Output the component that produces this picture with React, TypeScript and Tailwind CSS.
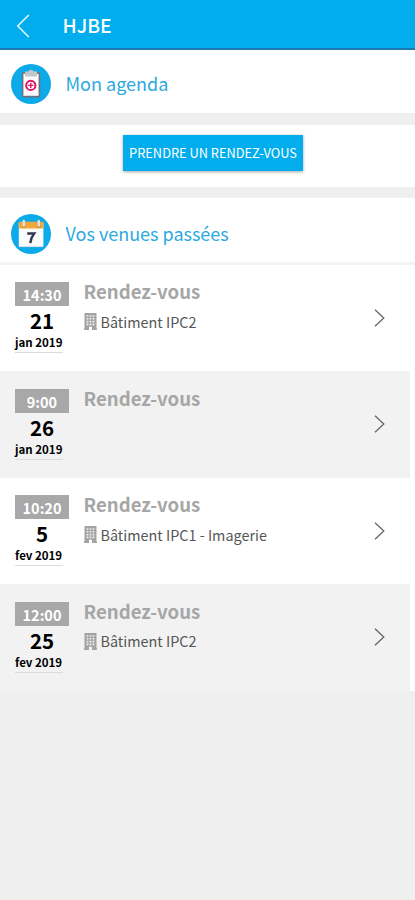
type Visit = {
  time: string;
  day: string;
  month: string;
  place?: string;
};

const visits: Visit[] = [
  { time: "14:30", day: "21", month: "jan 2019", place: "Bâtiment IPC2" },
  { time: "9:00", day: "26", month: "jan 2019" },
  { time: "10:20", day: "5", month: "fev 2019", place: "Bâtiment IPC1 - Imagerie" },
  { time: "12:00", day: "25", month: "fev 2019", place: "Bâtiment IPC2" },
];

function ClipboardIcon() {
  return (
    <svg width="40" height="40" viewBox="0 0 40 40" className="shrink-0">
      <circle cx="20" cy="20" r="20" fill="#0daaea" />
      <rect x="10.8" y="8.2" width="18.4" height="25.2" rx="1.6" fill="#6d7078" />
      <rect x="12.4" y="9.8" width="15.2" height="22" fill="#fbfbfd" />
      <path d="M14 12.4V7.500h3.200a2.900 2.300 0 0 1 5.600 0H26v4.900z" fill="#c3c7ca" />
      <circle cx="19.800" cy="21.400" r="4.600" fill="#fff" stroke="#e2125f" strokeWidth="2" />
      <path d="M19.800 18.800v5.200M17.200 21.400h5.200" stroke="#e2125f" strokeWidth="1.400" />
    </svg>
  );
}

function CalendarIcon() {
  return (
    <svg width="40" height="40" viewBox="0 0 40 40" className="shrink-0">
      <circle cx="20" cy="20" r="20" fill="#0daaea" />
      <rect x="7.800" y="8" width="24.600" height="25" rx="1.200" fill="#fafbfd" />
      <path d="M7.800 14.600V9A1.200 1.200 0 0 1 9 7.800h22.200A1.200 1.200 0 0 1 32.400 9v5.600z" fill="#f4a83c" />
      <path d="M8.900 32.600h22.500" stroke="#c9d3dc" strokeWidth="0.800" />
      <circle cx="12.800" cy="12.200" r="1.800" fill="#d08a2c" />
      <circle cx="27.800" cy="12.200" r="1.800" fill="#d08a2c" />
      <path d="M12.800 7v4.500M27.800 7v4.500" stroke="#dfe3e6" strokeWidth="2.400" strokeLinecap="round" />
      <path d="M16.200 19.500h7c-2.100 2.600-3.500 5.400-3.900 9.600" fill="none" stroke="#32364f" strokeWidth="2.300" />
    </svg>
  );
}

function BuildingIcon() {
  return (
    <svg width="13" height="17" viewBox="0 0 13 17" className="shrink-0">
      <path d="M0.500 0h12v15.500h.5V17H8v-3.200H5V17H0v-1.500h.5z" fill="#a3a3a3" />
      <path
        d="M2.600 2.200h1.800v1.600H2.600zM5.600 2.200h1.800v1.600H5.600zM8.600 2.200h1.800v1.600H8.600zM2.600 5h1.800v1.600H2.600zM5.600 5h1.800v1.600H5.600zM8.600 5h1.800v1.600H8.600zM2.600 7.800h1.800v1.600H2.600zM5.600 7.800h1.800v1.600H5.600zM8.600 7.800h1.800v1.600H8.600zM2.600 10.600h1.800v1.600H2.600zM5.600 10.600h1.800v1.600H5.600zM8.600 10.600h1.800v1.600H8.600z"
        fill="#f0f0f0"
      />
    </svg>
  );
}

function VisitRow({ visit, shaded }: { visit: Visit; shaded: boolean }) {
  return (
    <li className="bg-white pr-[5px]">
      <div className={`flex h-[106.500px] pl-[15px] ${shaded ? "bg-[#f2f2f2]" : "bg-white"}`}>
        <div className="w-[54px] pt-[17.500px]">
          <div className="h-6 bg-[#a8a8a8] text-center text-[14.500px] leading-[25px] font-bold text-white">
            {visit.time}
          </div>
          <div className="h-[29px] text-center text-[20.500px] leading-[29px] font-bold text-black">{visit.day}</div>
          <div className="h-[18px] w-12 border-b border-[#dcdcdc] text-[11.500px] leading-[14px] font-bold whitespace-nowrap text-black">
            {visit.month}
          </div>
        </div>
        <div className="ml-[14.500px] flex-1 pt-[12.600px]">
          <h2 className="text-[18.600px] leading-[28px] font-bold text-[#a6a6a6]">Rendez-vous</h2>
          {visit.place && (
            <p className="flex h-[33px] items-center gap-1 text-[14.400px] leading-[32px] whitespace-nowrap text-[#555]">
              <BuildingIcon />
              {visit.place}
            </p>
          )}
        </div>
        <svg width="12" height="20" viewBox="0 0 12 20" className="mt-[43px] mr-[24.500px]">
          <path d="M1 1.700 9.800 10 1 18.300" fill="none" stroke="#666" strokeWidth="1.300" />
        </svg>
      </div>
    </li>
  );
}

export default function App() {
  return (
    <div className="min-h-screen w-full bg-[#efefef] font-['Noto_Sans_CJK_SC',sans-serif]">
      <header className="flex h-[50px] items-center border-b-2 border-[#1979b2] bg-[#02adee] pt-[3px] text-white">
        <svg width="14" height="24" viewBox="0 0 14 24" className="ml-4">
          <path d="M12.800 1 1.800 12l11 11" fill="none" stroke="#e4f7ff" strokeWidth="1.600" />
        </svg>
        <h1 className="ml-[32.500px] pb-0.5 text-[19.200px] leading-6 font-medium">HJBE</h1>
      </header>

      <section className="flex h-[63px] items-center bg-white pt-[5px] pl-[10.500px]">
        <ClipboardIcon />
        <span className="ml-[15px] pb-0.5 text-[18px] leading-6 text-[#2ba9e1]">Mon agenda</span>
      </section>

      <section className="mt-3 flex h-[62px] justify-center bg-white pt-[10px] pl-[11px]">
        <button className="h-9 w-[180px] bg-[#02adee] text-[12.800px] leading-9 whitespace-nowrap text-white shadow-[0_1px_3px_rgba(0,0,0,0.35)]">
          PRENDRE UN RENDEZ-VOUS
        </button>
      </section>

      <section className="mt-[11px] flex h-[63.500px] items-center bg-white pt-[7.500px] pl-[10.500px]">
        <CalendarIcon />
        <span className="ml-[15px] pb-0.5 text-[18px] leading-6 text-[#2ba9e1]">Vos venues passées</span>
      </section>

      <ul className="border-t-[3px] border-[#f3f3f3]">
        {visits.map((visit, i) => (
          <VisitRow key={i} visit={visit} shaded={i % 2 === 1} />
        ))}
      </ul>
    </div>
  );
}
